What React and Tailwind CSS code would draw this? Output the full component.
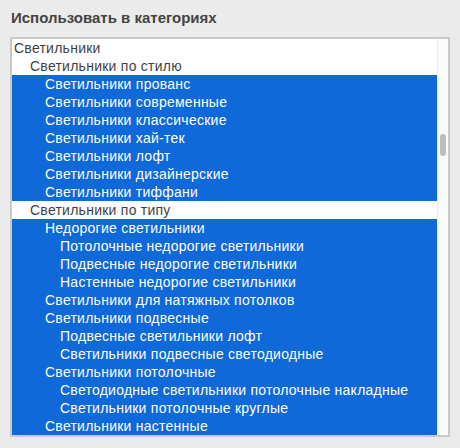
import React from "react";

const rows = [
  { t: "Светильники", l: 0, s: false },
  { t: "Светильники по стилю", l: 1, s: false },
  { t: "Светильники прованс", l: 2, s: true },
  { t: "Светильники современные", l: 2, s: true },
  { t: "Светильники классические", l: 2, s: true },
  { t: "Светильники хай-тек", l: 2, s: true },
  { t: "Светильники лофт", l: 2, s: true },
  { t: "Светильники дизайнерские", l: 2, s: true },
  { t: "Светильники тиффани", l: 2, s: true },
  { t: "Светильники по типу", l: 1, s: false },
  { t: "Недорогие светильники", l: 2, s: true },
  { t: "Потолочные недорогие светильники", l: 3, s: true },
  { t: "Подвесные недорогие светильники", l: 3, s: true },
  { t: "Настенные недорогие светильники", l: 3, s: true },
  { t: "Светильники для натяжных потолков", l: 2, s: true },
  { t: "Светильники подвесные", l: 2, s: true },
  { t: "Подвесные светильники лофт", l: 3, s: true },
  { t: "Светильники подвесные светодиодные", l: 3, s: true },
  { t: "Светильники потолочные", l: 2, s: true },
  { t: "Светодиодные светильники потолочные накладные", l: 3, s: true },
  { t: "Светильники потолочные круглые", l: 3, s: true },
  { t: "Светильники настенные", l: 2, s: true },
];

const indent = ["pl-[2px]", "pl-[18px]", "pl-[33px]", "pl-[48px]"];

export default function App() {
  return (
    <div
      className="w-[460px] h-[448px] bg-[#ebebeb] px-[10px] pt-[9px] flex flex-col"
      style={{ fontFamily: '"Liberation Sans", Arial, sans-serif' }}
    >
      <h2 className="text-[15px] leading-[18px] font-bold text-[#444444] pl-[1px]">
        Использовать в категориях
      </h2>
      <div className="mt-[10px] w-[440px] border-2 border-[#c9c9c9] bg-white flex">
        <ul className="flex-1 flex flex-col">
          {rows.map((r, i) => (
            <li
              key={i}
              className={`h-[18px] leading-[18px] text-[14px] tracking-[0.25px] whitespace-nowrap ${indent[r.l]} ${
                r.s ? "bg-[#0f69d8] text-white" : "text-[#3f3f3f]"
              }`}
            >
              {r.t}
            </li>
          ))}
        </ul>
        <div className="w-[11px] bg-[#fafafa] border-l border-[#ececec] flex justify-center pt-[95px]">
          <div className="w-[6px] h-[22px] rounded-[3px] bg-[#bdbdbd]" />
        </div>
      </div>
    </div>
  );
}
